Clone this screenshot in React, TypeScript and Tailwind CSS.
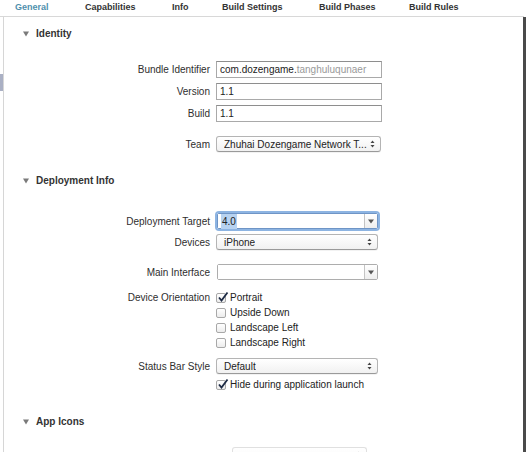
import type { ReactNode } from "react";

const FONT = { fontFamily: '"Liberation Sans", Arial, sans-serif' };

const TABS = [
	{ label: "General", w: "w-[70px]", active: true },
	{ label: "Capabilities", w: "w-[87px]" },
	{ label: "Info", w: "w-[50px]" },
	{ label: "Build Settings", w: "w-[97px]" },
	{ label: "Build Phases", w: "w-[90px]" },
	{ label: "Build Rules", w: "w-[80px]" },
];

function Disclosure({ title }: { title: string }) {
	return (
		<div className="flex items-center h-[13px] pl-[19px]">
			<svg width="6" height="6" viewBox="0 0 6 6" className="mr-[7px]">
				<path d="M0 0.5 L6 0.5 L3 5.5 Z" fill="#7a7a7a" />
			</svg>
			<span className="text-[10px] font-bold text-[#333]">{title}</span>
		</div>
	);
}

function Row({
	label,
	children,
	className = "",
}: {
	label?: string;
	children: ReactNode;
	className?: string;
}) {
	return (
		<div className={`flex items-center ${className}`}>
			<div className="w-[212px] pr-[6px] text-right text-[10px] text-[#2e2e2e] shrink-0">
				{label}
			</div>
			{children}
		</div>
	);
}

function TextField({ children }: { children?: ReactNode }) {
	return (
		<div className="w-[166px] h-[17px] border border-[#a9a9a9] border-t-[#8e8e8e] bg-white flex items-center px-[3px] text-[10px] text-[#222]">
			{children}
		</div>
	);
}

function UpDown() {
	return (
		<svg width="5" height="8" viewBox="0 0 5 8">
			<path d="M0.5 3 L2.5 0.5 L4.5 3 Z" fill="#444" />
			<path d="M0.5 5 L2.5 7.5 L4.5 5 Z" fill="#444" />
		</svg>
	);
}

function Popup({ text, w = "w-[162px]" }: { text?: string; w?: string }) {
	return (
		<div
			className={`${w} h-[16px] rounded-[3px] border border-[#b4b4b4] border-b-[#9a9a9a] bg-gradient-to-b from-white to-[#f1f1f1] flex items-center justify-between pl-[7px] pr-[5px] text-[10px] text-[#222] shadow-[0_1px_0_rgba(0,0,0,0.05)]`}
		>
			<span className="truncate">{text}</span>
			<UpDown />
		</div>
	);
}

function Combo({ text, focused }: { text?: string; focused?: boolean }) {
	return (
		<div
			className={`w-[161px] h-[16px] flex rounded-[2px] ml-px ${
				focused
					? "shadow-[0_0_0_2px_#8db4e2] border border-[#6f95c6]"
					: "border border-[#adadad]"
			}`}
		>
			<div className="flex-1 bg-white flex items-center px-[3px] text-[10px] text-[#222]">
				{text && <span className="bg-[#b7d2f0] px-[1px]">{text}</span>}
			</div>
			<div className="w-[13px] border-l border-[#c4c4c4] bg-gradient-to-b from-white to-[#eee] flex items-center justify-center">
				<svg width="6" height="5" viewBox="0 0 6 5">
					<path d="M0 0.5 L6 0.5 L3 4.5 Z" fill="#555" />
				</svg>
			</div>
		</div>
	);
}

function Check({ label, checked }: { label: string; checked?: boolean }) {
	return (
		<div className="flex items-center h-[15px] gap-[4px]">
			<div className="relative w-[10px] h-[10px] rounded-[2px] border border-[#a8a8a8] bg-gradient-to-b from-white to-[#ececec]">
				{checked && (
					<svg
						width="12"
						height="12"
						viewBox="0 0 12 12"
						className="absolute -top-[3px] left-0"
					>
						<path
							d="M2 6.5 L4.5 9.5 L10.5 1.5"
							fill="none"
							stroke="#1d2a44"
							strokeWidth="1.8"
						/>
					</svg>
				)}
			</div>
			<span className="text-[10px] text-[#222]">{label}</span>
		</div>
	);
}

function Separator({ className = "" }: { className?: string }) {
	return <div className={`ml-[13px] h-px bg-[#dcdcdc] ${className}`} />;
}

export default function App() {
	return (
		<div
			className="w-[528px] h-[452px] overflow-hidden bg-white flex flex-col"
			style={FONT}
		>
			<div className="flex items-center h-[17px] pl-[15px] border-b border-[#d8d8d8] mr-[4px] shrink-0">
				{TABS.map((t) => (
					<span
						key={t.label}
						className={`${t.w} shrink-0 text-[9px] font-bold ${
							t.active ? "text-[#4f8fad]" : "text-[#333]"
						}`}
					>
						{t.label}
					</span>
				))}
			</div>
			<div className="flex flex-1 min-h-0">
				<div className="w-[3px] relative shrink-0">
					<div className="absolute left-0 top-[57px] w-[3px] h-[17px] bg-[#aab0c4]" />
				</div>
				<div className="w-px bg-[#d6d6d6] shrink-0" />
				<div className="flex-1 flex flex-col">
					<div className="mt-[10px]">
						<Disclosure title="Identity" />
					</div>
					<Row label="Bundle Identifier" className="mt-[21px]">
						<TextField>
							<span>com.dozengame.</span>
							<span className="text-[#9a9a9a]">tanghuluqunaer</span>
						</TextField>
					</Row>
					<Row label="Version" className="mt-[5px]">
						<TextField>1.1</TextField>
					</Row>
					<Row label="Build" className="mt-[5px]">
						<TextField>1.1</TextField>
					</Row>
					<Row label="Team" className="mt-[14px]">
						<Popup text="Zhuhai Dozengame Network T..." w="w-[165px]" />
					</Row>
					<Separator className="mt-[11px]" />
					<div className="mt-[11px]">
						<Disclosure title="Deployment Info" />
					</div>
					<Row label="Deployment Target" className="mt-[26px]">
						<Combo text="4.0" focused />
					</Row>
					<Row label="Devices" className="mt-[5px]">
						<Popup text="iPhone" />
					</Row>
					<Row label="Main Interface" className="mt-[14px]">
						<Combo />
					</Row>
					<div className="flex mt-[10px]">
						<div className="w-[212px] pr-[6px] text-right text-[10px] text-[#2e2e2e] h-[15px] leading-[15px] shrink-0">
							Device Orientation
						</div>
						<div className="flex flex-col">
							<Check label="Portrait" checked />
							<Check label="Upside Down" />
							<Check label="Landscape Left" />
							<Check label="Landscape Right" />
						</div>
					</div>
					<Row label="Status Bar Style" className="mt-[8px]">
						<Popup text="Default" />
					</Row>
					<Row className="mt-[3px]">
						<Check label="Hide during application launch" checked />
					</Row>
					<Separator className="mt-[12px]" />
					<div className="mt-[11px]">
						<Disclosure title="App Icons" />
					</div>
					<Row className="mt-[19px] opacity-40">
						<div className="ml-[16px]">
							<Popup w="w-[135px]" />
						</div>
					</Row>
				</div>
				<div className="w-[3px] bg-[#4a4a4a] shrink-0" />
				<div className="w-[2px] shrink-0" />
			</div>
		</div>
	);
}
